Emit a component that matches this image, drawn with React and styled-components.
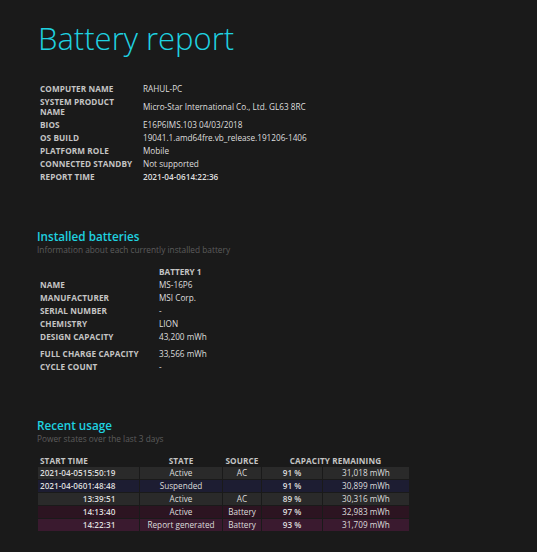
import React from "react";
import styled, { createGlobalStyle } from "styled-components";

const Global = createGlobalStyle`
  html, body { margin: 0; padding: 0; background: #1a1a1a; }
  body { font-family: "Open Sans", "Noto Sans", sans-serif; color: #d8d8d8; }
`;

const Page = styled.div`
  padding: 16px 0 20px 37px;
  min-height: 552px;
  box-sizing: border-box;
`;

const Title = styled.h1`
  margin: 0 0 0 1px;
  font-size: 31px;
  font-weight: 300;
  color: #1fd2e0;
  line-height: 44px;
`;

const InfoTable = styled.table`
  border-collapse: collapse;
  margin: ${(p) => p.$mt}px 0 0 1px;
  font-size: 8.2px;
`;

const Label = styled.td`
  width: ${(p) => p.$w}px;
  padding: ${(p) => p.$pt || 0}px 2px 0 2px;
  font-weight: 700;
  text-transform: uppercase;
  color: #c4c4c4;
  line-height: 10px;
  height: ${(p) => p.$h || 13}px;
  vertical-align: middle;
  letter-spacing: 0.1px;
  box-sizing: border-box;
`;

const Value = styled.td`
  padding: ${(p) => p.$pt || 0}px 2px 0 2px;
  color: #dedede;
  font-weight: ${(p) => (p.$bold ? 600 : 400)};
  vertical-align: middle;
  white-space: nowrap;
`;

const Section = styled.div`
  margin-top: ${(p) => p.$mt}px;
`;

const H2 = styled.h2`
  margin: 0;
  font-size: 11.7px;
  font-weight: 600;
  color: #1fd2e0;
  line-height: 16px;
`;

const Sub = styled.div`
  font-size: 8.3px;
  color: #5c5c5c;
  line-height: 11px;
`;

const ColHead = styled.td`
  padding: 0 2px;
  font-weight: 700;
  color: #c4c4c4;
  height: 14px;
  vertical-align: middle;
`;

const UsageTable = styled.table`
  border-collapse: separate;
  border-spacing: 1px;
  margin: 10px 0 0 0;
  font-size: 8.2px;
`;

const Th = styled.td`
  font-weight: 700;
  color: #c4c4c4;
  text-transform: uppercase;
  text-align: ${(p) => p.$align || "center"};
  padding: 0 2px;
  height: 11px;
  line-height: 11px;
  letter-spacing: 0.1px;
`;

const rowColors = {
  ac: "#2a2a2a",
  suspended: "#1d1d32",
  battery: "#2c1421",
  report: "#3a1a2f",
};

const Tr = styled.tr`
  background: ${(p) => rowColors[p.$kind]};
`;

const Td = styled.td`
  height: 12px;
  line-height: 12px;
  padding: 0 2px;
  color: #dcdcdc;
  text-align: ${(p) => p.$align || "center"};
  width: ${(p) => (p.$w ? p.$w + "px" : "auto")};
  white-space: nowrap;
`;

const DateSpan = styled.span`
  font-weight: 600;
  visibility: ${(p) => (p.$hidden ? "hidden" : "visible")};
`;

const Strong = styled.span`
  font-weight: 600;
`;

const info = [
  ["Computer name", "RAHUL-PC"],
  ["System product name", "Micro-Star International Co., Ltd. GL63 8RC", 23],
  ["BIOS", "E16P6IMS.103 04/03/2018"],
  ["OS build", "19041.1.amd64fre.vb_release.191206-1406"],
  ["Platform role", "Mobile"],
  ["Connected standby", "Not supported"],
  ["Report time", "2021-04-0614:22:36", null, true],
];

const battery = [
  ["Name", "MS-16P6"],
  ["Manufacturer", "MSI Corp."],
  ["Serial number", "-"],
  ["Chemistry", "LION"],
  ["Design capacity", "43,200 mWh"],
  ["Full charge capacity", "33,566 mWh", 17, 4],
  ["Cycle count", "-"],
];

const usage = [
  ["2021-04-05", "15:50:19", false, "Active", "AC", "91 %", "31,018 mWh", "ac"],
  ["2021-04-06", "01:48:48", false, "Suspended", "", "91 %", "30,899 mWh", "suspended"],
  ["2021-04-06", "13:39:51", true, "Active", "AC", "89 %", "30,316 mWh", "ac"],
  ["2021-04-06", "14:13:40", true, "Active", "Battery", "97 %", "32,983 mWh", "battery"],
  ["2021-04-06", "14:22:31", true, "Report generated", "Battery", "93 %", "31,709 mWh", "report"],
];

export default function App() {
  return (
    <Page>
      <Global />
      <Title>Battery report</Title>
      <InfoTable $mt={22}>
        <tbody>
          {info.map(([l, v, h, b]) => (
            <tr key={l}>
              <Label $w={103} $h={h}>{l}</Label>
              <Value $bold={b}>{v}</Value>
            </tr>
          ))}
        </tbody>
      </InfoTable>

      <Section $mt={45}>
        <H2>Installed batteries</H2>
        <Sub>Information about each currently installed battery</Sub>
        <InfoTable $mt={9}>
          <tbody>
            <tr>
              <Label $w={119} $h={14} />
              <ColHead>BATTERY 1</ColHead>
            </tr>
            {battery.map(([l, v, h, pt]) => (
              <tr key={l}>
                <Label $w={119} $h={h} $pt={pt}>{l}</Label>
                <Value $pt={pt}>{v}</Value>
              </tr>
            ))}
          </tbody>
        </InfoTable>
      </Section>

      <Section $mt={44}>
        <H2>Recent usage</H2>
        <Sub>Power states over the last 3 days</Sub>
        <UsageTable>
          <tbody>
            <tr>
              <Th $align="left">Start time</Th>
              <Th>State</Th>
              <Th>Source</Th>
              <Th colSpan={2}>Capacity remaining</Th>
            </tr>
            {usage.map(([d, t, hid, st, src, pct, mwh, kind]) => (
              <Tr key={t} $kind={kind}>
                <Td $align="left" $w={97}>
                  <DateSpan $hidden={hid}>{d}</DateSpan>
                  <Strong>{t}</Strong>
                </Td>
                <Td $w={78}>{st}</Td>
                <Td $w={34}>{src}</Td>
                <Td $w={56}><Strong>{pct}</Strong></Td>
                <Td $w={82}>{mwh}</Td>
              </Tr>
            ))}
          </tbody>
        </UsageTable>
      </Section>
    </Page>
  );
}
